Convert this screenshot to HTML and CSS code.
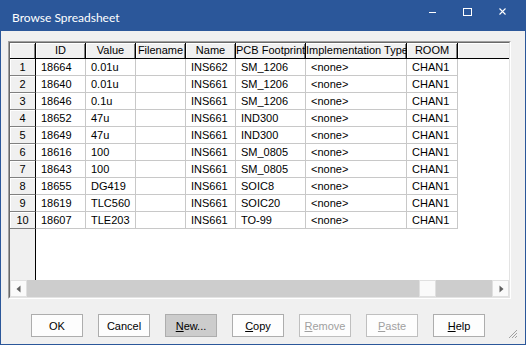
FILE: index.html
```html
<!DOCTYPE html>
<html lang="en">
<head>
  <meta charset="UTF-8">
  <title>Browse Spreadsheet</title>
  <link rel="stylesheet" href="styles.css">
</head>
<body>
  <div class="window">
    <div class="titlebar">
      <span class="title">Browse Spreadsheet</span>
      <div class="caption">
        <span class="cap-btn">
          <svg width="10" height="10" viewBox="0 0 10 10"><path d="M1 5.5h7" stroke="#fff" stroke-width="1"/></svg>
        </span>
        <span class="cap-btn">
          <svg width="10" height="10" viewBox="0 0 10 10"><rect x="0.5" y="1.5" width="8" height="7" fill="none" stroke="#fff" stroke-width="1"/></svg>
        </span>
        <span class="cap-btn">
          <svg width="10" height="10" viewBox="0 0 10 10"><path d="M1.5 1.5l6 6M7.5 1.5l-6 6" stroke="#fff" stroke-width="1.1"/></svg>
        </span>
      </div>
    </div>

    <div class="client">
      <div class="sheet">
        <div class="sheet-inner">
          <div class="sheet-view">
            <div class="row head">
              <div class="hdr corner"></div>
              <div class="hdr">ID</div>
              <div class="hdr">Value</div>
              <div class="hdr">Filename</div>
              <div class="hdr">Name</div>
              <div class="hdr">PCB Footprint</div>
              <div class="hdr">Implementation Type</div>
              <div class="hdr">ROOM</div>
              <div class="hdr filler"></div>
            </div>
            <div class="row"><div class="rowhdr">1</div><div class="cell">18664</div><div class="cell">0.01u</div><div class="cell"></div><div class="cell">INS662</div><div class="cell">SM_1206</div><div class="cell">&lt;none&gt;</div><div class="cell">CHAN1</div></div>
            <div class="row"><div class="rowhdr">2</div><div class="cell">18640</div><div class="cell">0.01u</div><div class="cell"></div><div class="cell">INS661</div><div class="cell">SM_1206</div><div class="cell">&lt;none&gt;</div><div class="cell">CHAN1</div></div>
            <div class="row"><div class="rowhdr">3</div><div class="cell">18646</div><div class="cell">0.1u</div><div class="cell"></div><div class="cell">INS661</div><div class="cell">SM_1206</div><div class="cell">&lt;none&gt;</div><div class="cell">CHAN1</div></div>
            <div class="row"><div class="rowhdr">4</div><div class="cell">18652</div><div class="cell">47u</div><div class="cell"></div><div class="cell">INS661</div><div class="cell">IND300</div><div class="cell">&lt;none&gt;</div><div class="cell">CHAN1</div></div>
            <div class="row"><div class="rowhdr">5</div><div class="cell">18649</div><div class="cell">47u</div><div class="cell"></div><div class="cell">INS661</div><div class="cell">IND300</div><div class="cell">&lt;none&gt;</div><div class="cell">CHAN1</div></div>
            <div class="row"><div class="rowhdr">6</div><div class="cell">18616</div><div class="cell">100</div><div class="cell"></div><div class="cell">INS661</div><div class="cell">SM_0805</div><div class="cell">&lt;none&gt;</div><div class="cell">CHAN1</div></div>
            <div class="row"><div class="rowhdr">7</div><div class="cell">18643</div><div class="cell">100</div><div class="cell"></div><div class="cell">INS661</div><div class="cell">SM_0805</div><div class="cell">&lt;none&gt;</div><div class="cell">CHAN1</div></div>
            <div class="row"><div class="rowhdr">8</div><div class="cell">18655</div><div class="cell">DG419</div><div class="cell"></div><div class="cell">INS661</div><div class="cell">SOIC8</div><div class="cell">&lt;none&gt;</div><div class="cell">CHAN1</div></div>
            <div class="row"><div class="rowhdr">9</div><div class="cell">18619</div><div class="cell">TLC560</div><div class="cell"></div><div class="cell">INS661</div><div class="cell">SOIC20</div><div class="cell">&lt;none&gt;</div><div class="cell">CHAN1</div></div>
            <div class="row"><div class="rowhdr">10</div><div class="cell">18607</div><div class="cell">TLE203</div><div class="cell"></div><div class="cell">INS661</div><div class="cell">TO-99</div><div class="cell">&lt;none&gt;</div><div class="cell">CHAN1</div></div>
          </div>

          <div class="hscroll">
            <span class="sb-btn">
              <svg width="6" height="8" viewBox="0 0 6 8"><path d="M4.5 0.5v7L0.5 4z" fill="#606060"/></svg>
            </span>
            <div class="sb-track">
              <span class="sb-thumb" style="margin-left: 392px"></span>
            </div>
            <span class="sb-btn">
              <svg width="6" height="8" viewBox="0 0 6 8"><path d="M1.5 0.5v7L5.5 4z" fill="#606060"/></svg>
            </span>
          </div>
        </div>
      </div>

      <div class="buttons">
        <button class="btn">OK</button>
        <button class="btn">Cancel</button>
        <button class="btn hot"><u>N</u>ew...</button>
        <button class="btn"><u>C</u>opy</button>
        <button class="btn" disabled><u>R</u>emove</button>
        <button class="btn" disabled><u>P</u>aste</button>
        <button class="btn"><u>H</u>elp</button>
      </div>
    </div>

    <svg class="grip" width="11" height="11" viewBox="0 0 11 11">
      <path d="M10 2L2 10M10 5L5 10M10 8L8 10" stroke="#a0a0a0" stroke-width="1"/>
    </svg>
  </div>
</body>
</html>
```

FILE: styles.css
```css
body {
  margin: 0;
  font-family: "Liberation Sans", Arial, sans-serif;
  font-size: 11px;
}

.window {
  position: relative;
  width: 526px;
  height: 345px;
  box-sizing: border-box;
  border: 1px solid #2b579a;
  border-top: none;
  background-color: #f0f0f0;
  display: flex;
  flex-direction: column;
}

.titlebar {
  height: 31px;
  background-color: #2b579a;
  display: flex;
  align-items: flex-start;
  justify-content: space-between;
  flex-shrink: 0;
}

.title {
  font-family: Lato, "Noto Sans", sans-serif;
  font-size: 12px;
  color: #fff;
  padding: 10px 0 0 11px;
}

.caption {
  display: flex;
  margin-right: 5px;
}

.cap-btn {
  width: 35px;
  height: 24px;
  display: flex;
  align-items: center;
  justify-content: center;
}

.client {
  padding: 10px 0 0 7px;
}

.sheet {
  width: 503px;
  height: 258px;
  box-sizing: border-box;
  border: 1px solid;
  border-color: #a0a0a0 #ffffff #ffffff #a0a0a0;
}

.sheet-inner {
  height: 100%;
  box-sizing: border-box;
  border: 1px solid;
  border-color: #696969 #e3e3e3 #e3e3e3 #696969;
  display: flex;
  flex-direction: column;
}

.sheet-view {
  flex: 1;
  overflow: hidden;
  background: linear-gradient(to right, #f0f0f0 0 25px, #000 25px 26px, #fff 26px);
}

.row {
  display: grid;
  grid-template-columns: 26px 50px 50px 50px 50px 70px 101px 51px 1fr;
  height: 17px;
}

.row.head {
  height: 16px;
}

.hdr,
.rowhdr,
.cell {
  box-sizing: border-box;
  white-space: nowrap;
  overflow: hidden;
}

.hdr {
  background-color: #f0f0f0;
  border-right: 1px solid #000;
  border-bottom: 1px solid #000;
  box-shadow: inset 1px 1px #fff, inset -1px 0 #808080;
  text-align: center;
  line-height: 15px;
}

.hdr.filler {
  border-right: none;
  box-shadow: inset 1px 1px #fff;
}

.rowhdr {
  background-color: #f0f0f0;
  border-right: 1px solid #000;
  border-bottom: 1px solid #808080;
  box-shadow: inset 1px 1px #fff;
  text-align: center;
  line-height: 16px;
}

.cell {
  background-color: #fff;
  border-right: 1px solid #c8c8c8;
  border-bottom: 1px solid #c8c8c8;
  padding-left: 5px;
  line-height: 16px;
}

.hscroll {
  height: 17px;
  display: flex;
  background-color: #cdcdcd;
  flex-shrink: 0;
}

.sb-btn {
  width: 17px;
  box-sizing: border-box;
  background-color: #fafafa;
  border: 1px solid #e0e0e0;
  display: flex;
  align-items: center;
  justify-content: center;
}

.sb-track {
  flex: 1;
  display: flex;
}

.sb-thumb {
  width: 17px;
  box-sizing: border-box;
  background-color: #fafafa;
  border: 1px solid #e0e0e0;
}

.buttons {
  display: flex;
  gap: 15px;
  margin: 15px 0 0 23px;
}

.btn {
  width: 52px;
  height: 23px;
  padding: 0;
  font-family: "Liberation Sans", Arial, sans-serif;
  font-size: 11px;
  color: #000;
  background-color: #fdfdfd;
  border: 1px solid #adadad;
}

.btn.hot {
  background-color: #cccccc;
}

.btn:disabled {
  color: #a0a0a0;
  border-color: #bfbfbf;
}

.grip {
  position: absolute;
  right: 7px;
  bottom: 5px;
}
```
